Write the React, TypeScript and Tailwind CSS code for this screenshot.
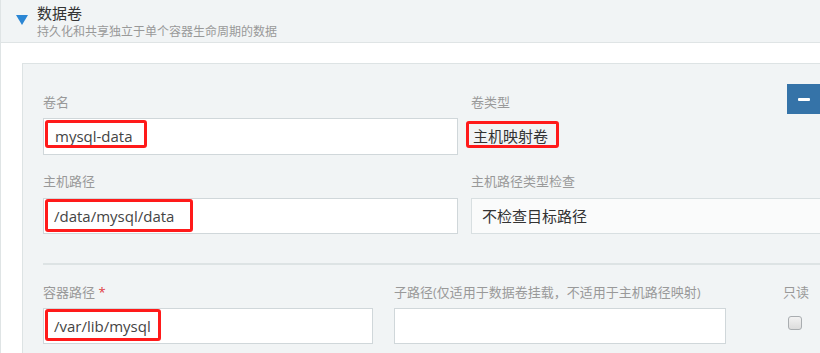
import React from "react";

const FONT = { fontFamily: '"Open Sans", "Noto Sans CJK SC", sans-serif' };

// Red annotation rectangle drawn over a field
function RedBox({ className }: { className: string }) {
  return (
    <span
      className={`pointer-events-none absolute rounded-[3px] border-[3px] border-[#ff1a1a] ${className}`}
    />
  );
}

function Label({ children }: { children: React.ReactNode }) {
  return (
    <div className="h-[20px] text-[13px] leading-[20px] text-[#999] whitespace-nowrap">
      {children}
    </div>
  );
}

export default function App() {
  return (
    <div
      className="relative h-[353px] w-[820px] overflow-hidden border-l border-[#dfe4e5] bg-white"
      style={FONT}
    >
      {/* section header */}
      <div className="flex h-[43px] border-b border-[#dfe4e5] bg-[#f1f4f5]">
        <div className="ml-[15px] mt-[15px] shrink-0">
          <svg width="12" height="10" viewBox="0 0 12 10">
            <path d="M0 0 L12 0 L6 10 Z" fill="#2b86d4" />
          </svg>
        </div>
        <div className="ml-[9px] flex flex-col pt-[5px]">
          <span className="block h-[16px] text-[15px] leading-[16px] text-[#333]">数据卷</span>
          <span className="mt-[3px] block h-[16px] text-[12px] leading-[16px] text-[#999]">
            持久化和共享独立于单个容器生命周期的数据
          </span>
        </div>
      </div>

      {/* volume card */}
      <div className="relative ml-[21px] mt-[20px] w-[840px] border border-[#dde3e4] bg-[#f1f4f5] pb-[20px] pl-[20px] pt-[28px]">
        <button className="absolute left-[764px] top-[20px] flex h-[30px] w-[33px] items-center justify-center bg-[#3573a8]">
          <span className="h-[3px] w-[12px] rounded-[1px] bg-white" />
        </button>

        {/* row 1 */}
        <div className="flex">
          <div className="w-[415px] shrink-0">
            <Label>卷名</Label>
            <div className="relative mt-[6px] flex h-[37px] items-center border border-[#d0d7da] bg-white pl-[11px] text-[15px] text-[#444]">
              mysql-data
              <RedBox className="left-[1px] top-[1px] h-[28px] w-[102px]" />
            </div>
          </div>
          <div className="ml-[13px]">
            <Label>卷类型</Label>
            <div className="relative mt-[6px] flex h-[37px] items-center pl-[2px] text-[15px] text-[#333]">
              主机映射卷
              <RedBox className="left-[-5px] top-[3px] h-[27px] w-[93px]" />
            </div>
          </div>
        </div>

        {/* row 2 */}
        <div className="mt-[16px] flex">
          <div className="w-[415px] shrink-0">
            <Label>主机路径</Label>
            <div className="relative mt-[7px] flex h-[36px] items-center border border-[#d0d7da] bg-white pl-[10px] text-[15px] text-[#444]">
              /data/mysql/data
              <RedBox className="left-[1px] top-[0px] h-[33px] w-[148px]" />
            </div>
          </div>
          <div className="ml-[13px] w-[400px] shrink-0">
            <Label>主机路径类型检查</Label>
            <div className="mt-[7px] flex h-[36px] items-center border border-[#d8dfe1] bg-[#fafbfb] pl-[10px] text-[15px] text-[#333]">
              不检查目标路径
            </div>
          </div>
        </div>

        <div className="mt-[29px] h-[2px] w-full bg-[#dde3e4]" />

        {/* row 3 */}
        <div className="mt-[17px] flex">
          <div className="w-[330px] shrink-0">
            <Label>
              容器路径 <span className="text-[#e0393e]">*</span>
            </Label>
            <div className="relative mt-[6px] flex h-[36px] items-center border border-[#d0d7da] bg-white pl-[10px] text-[15px] text-[#444]">
              /var/lib/mysql
              <RedBox className="left-[1px] top-[0px] h-[32px] w-[116px]" />
            </div>
          </div>
          <div className="ml-[21px] w-[332px] shrink-0">
            <Label>子路径(仅适用于数据卷挂载，不适用于主机路径映射)</Label>
            <div className="mt-[6px] h-[36px] border border-[#d0d7da] bg-white" />
          </div>
          <div className="ml-[57px]">
            <Label>只读</Label>
            <div className="ml-[5px] mt-[14px] h-[14px] w-[14px] rounded-[3px] border border-[#a9adb0] bg-gradient-to-b from-[#f2f2f2] to-[#dcdcdc]" />
          </div>
        </div>
      </div>
    </div>
  );
}
